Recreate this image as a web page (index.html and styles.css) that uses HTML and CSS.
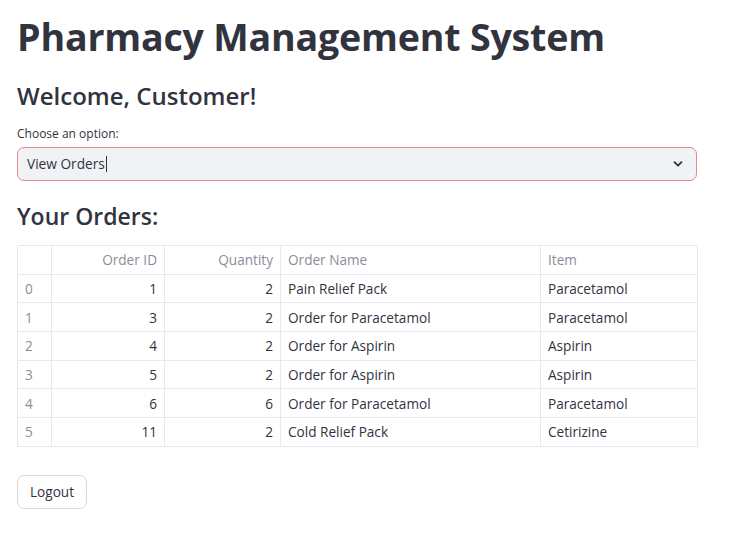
FILE: index.html
```html
<!DOCTYPE html>
<html lang="en">
<head>
<meta charset="utf-8">
<title>Pharmacy Management System</title>
<link rel="stylesheet" href="styles.css">
</head>
<body>
<main class="app">
  <h1 class="title">Pharmacy Management System</h1>
  <h2 class="subtitle">Welcome, Customer!</h2>
  <div class="field">
    <label class="field-label">Choose an option:</label>
    <div class="select">
      <span class="select-value">View Orders</span><span class="caret"></span>
      <svg class="chevron" width="12" height="12" viewBox="0 0 12 12"><path d="M2.5 4.2 L6 7.6 L9.5 4.2" fill="none" stroke="#31333f" stroke-width="1.8" stroke-linecap="round" stroke-linejoin="round"/></svg>
    </div>
  </div>
  <h3 class="section">Your Orders:</h3>
  <table class="grid">
    <colgroup>
      <col class="c-idx"><col class="c-id"><col class="c-qty"><col class="c-name"><col class="c-item">
    </colgroup>
    <thead>
      <tr><th></th><th class="num">Order ID</th><th class="num">Quantity</th><th>Order Name</th><th>Item</th></tr>
    </thead>
    <tbody>
      <tr><td class="idx">0</td><td class="num">1</td><td class="num">2</td><td>Pain Relief Pack</td><td>Paracetamol</td></tr>
      <tr><td class="idx">1</td><td class="num">3</td><td class="num">2</td><td>Order for Paracetamol</td><td>Paracetamol</td></tr>
      <tr><td class="idx">2</td><td class="num">4</td><td class="num">2</td><td>Order for Aspirin</td><td>Aspirin</td></tr>
      <tr><td class="idx">3</td><td class="num">5</td><td class="num">2</td><td>Order for Aspirin</td><td>Aspirin</td></tr>
      <tr><td class="idx">4</td><td class="num">6</td><td class="num">6</td><td>Order for Paracetamol</td><td>Paracetamol</td></tr>
      <tr><td class="idx">5</td><td class="num">11</td><td class="num">2</td><td>Cold Relief Pack</td><td>Cetirizine</td></tr>
    </tbody>
  </table>
  <button class="btn" type="button">Logout</button>
</main>
</body>
</html>
```

FILE: styles.css
```css
* { box-sizing: border-box; }
html, body { margin: 0; padding: 0; background: #ffffff; }
body {
  font-family: "Open Sans", "Noto Sans", sans-serif;
  color: #31333f;
}
.app {
  width: 680px;
  margin-left: 17px;
  padding-top: 12px;
}
.title {
  margin: 0;
  font-size: 37.6px;
  font-weight: 700;
  line-height: 50px;
  letter-spacing: -0.2px;
}
.subtitle {
  margin: 19px 0 0;
  font-size: 24px;
  font-weight: 600;
  line-height: 30px;
}
.field { margin-top: 16px; }
.field-label {
  display: block;
  font-size: 12px;
  line-height: 14px;
  margin-bottom: 6px;
}
.select {
  height: 34px;
  background: #f0f2f6;
  border: 1px solid #e38a8e;
  border-radius: 7px;
  display: flex;
  align-items: center;
  padding: 0 12px 0 9px;
  font-size: 13.7px;
}
.select-value { line-height: 16px; }
.caret {
  width: 1px;
  height: 16px;
  background: #31333f;
  margin-left: 1px;
}
.chevron { margin-left: auto; }
.section {
  margin: 21px 0 0;
  font-size: 23px;
  font-weight: 600;
  line-height: 28px;
}
.grid {
  margin-top: 15px;
  width: 680px;
  border-collapse: collapse;
  table-layout: fixed;
  font-size: 13.6px;
}
.c-idx { width: 34px; }
.c-id { width: 113px; }
.c-qty { width: 116px; }
.c-name { width: 260px; }
.c-item { width: 157px; }
.grid th, .grid td {
  border: 1px solid #e6e9ef;
  height: 28.7px;
  padding: 0 7px;
  text-align: left;
  white-space: nowrap;
}
.grid th {
  font-weight: 400;
  color: #8a8d99;
}
.grid td { color: #31333f; }
.grid td.idx { color: #8a8d99; }
.grid .num { text-align: right; }
.btn {
  margin-top: 28px;
  display: block;
  height: 34px;
  padding: 0 12px;
  background: #ffffff;
  border: 1px solid #d6d8de;
  border-radius: 7px;
  font-family: inherit;
  font-size: 13.6px;
  color: #31333f;
}
```
